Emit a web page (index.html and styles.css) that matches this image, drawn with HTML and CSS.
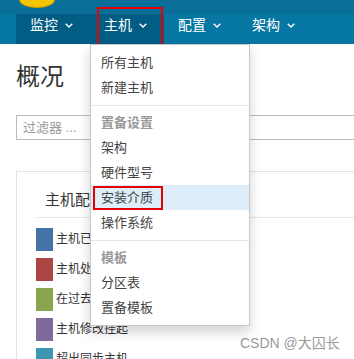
FILE: index.html
```html
<!DOCTYPE html>
<html lang="zh-CN">
  <head>
    <meta charset="UTF-8" />
    <meta name="viewport" content="width=device-width, initial-scale=1.0" />
    <title>概况</title>
    <link rel="stylesheet" href="styles.css">
  </head>
  <body>
    <div class="top-strip">
      <svg class="logo" width="40" height="9" viewBox="0 0 40 9">
        <ellipse cx="19" cy="0" rx="17.5" ry="7.5" fill="#f4c600" stroke="#c79b00" stroke-width="1" />
      </svg>
    </div>

    <nav class="navbar">
      <div class="nav-item dark">监控<svg class="caret" width="8" height="5" viewBox="0 0 8 5"><polyline points="0.7,0.7 4,4 7.3,0.7" /></svg></div>
      <div class="nav-item dark open">
        主机<svg class="caret" width="8" height="5" viewBox="0 0 8 5"><polyline points="0.7,0.7 4,4 7.3,0.7" /></svg>
        <span class="mark mark-nav"></span>
        <ul class="dropdown">
          <li>所有主机</li>
          <li>新建主机</li>
          <li class="divider"></li>
          <li class="header">置备设置</li>
          <li>架构</li>
          <li>硬件型号</li>
          <li class="active">安装介质<span class="mark mark-item"></span></li>
          <li>操作系统</li>
          <li class="divider"></li>
          <li class="header">模板</li>
          <li>分区表</li>
          <li>置备模板</li>
        </ul>
      </div>
      <div class="nav-item">配置<svg class="caret" width="8" height="5" viewBox="0 0 8 5"><polyline points="0.7,0.7 4,4 7.3,0.7" /></svg></div>
      <div class="nav-item">架构<svg class="caret" width="8" height="5" viewBox="0 0 8 5"><polyline points="0.7,0.7 4,4 7.3,0.7" /></svg></div>
    </nav>

    <main class="content">
      <h1 class="title">概况</h1>
      <input class="filter" type="text" placeholder="过滤器 ..." />

      <section class="card">
        <h2 class="card-title">主机配置状态</h2>
        <ul class="legend">
          <li><span class="swatch" style="background:#4572a7"></span>主机已更改</li>
          <li><span class="swatch" style="background:#aa4643"></span>主机处于错误状态</li>
          <li><span class="swatch" style="background:#89a54e"></span>在过去35分钟内</li>
          <li><span class="swatch" style="background:#80699b"></span>主机修改挂起</li>
          <li><span class="swatch" style="background:#3d96ae"></span>超出同步主机</li>
        </ul>
      </section>
    </main>

    <div class="watermark">CSDN @大囚长</div>
  </body>
</html>
```

FILE: styles.css
```css
html, body {
  margin: 0;
  height: 359px;
  overflow: hidden;
}
body {
  position: relative;
  font-family: "Liberation Sans", "Noto Sans CJK SC", sans-serif;
  color: #333;
  background: #fff;
}

/* 상단 */
.top-strip {
  height: 14px;
  background: #096f99;
  position: relative;
}
.logo {
  position: absolute;
  left: 18px;
  top: 0;
}

.navbar {
  display: flex;
  height: 30px;
  padding-left: 16px;
  background: #0677a2;
  position: relative;
}
.nav-item {
  position: relative;
  display: flex;
  align-items: flex-start;
  padding: 0 17px 0 14px;
  line-height: 22px;
  font-size: 14px;
  color: #fff;
  width: 74px;
  box-sizing: border-box;
}
.nav-item.dark {
  background: #015d84;
}
.caret {
  margin: 9px 0 0 7px;
  fill: none;
  stroke: #fff;
  stroke-width: 1.4;
}

/* 빨간 표시 */
.mark {
  position: absolute;
  border: 2px solid #e60000;
  box-sizing: border-box;
}
.mark-nav {
  left: 7px;
  top: -7px;
  width: 66px;
  height: 39px;
}
.mark-item {
  left: 2px;
  top: 1px;
  width: 70px;
  height: 24px;
}

/* 드롭다운 */
.dropdown {
  position: absolute;
  top: 30px;
  left: 0;
  width: 160px;
  box-sizing: border-box;
  margin: 0;
  padding: 5px 0;
  list-style: none;
  background: #fff;
  border: 1px solid #c8c8c8;
  box-shadow: 0 6px 12px rgba(0, 0, 0, 0.175);
  z-index: 5;
}
.dropdown li {
  position: relative;
  padding: 3px 10px;
  line-height: 19px;
  font-size: 13px;
  color: #444;
}
.dropdown .header {
  color: #999;
  font-weight: bold;
}
.dropdown .active {
  background: #ddeefa;
}
.dropdown .divider {
  height: 1px;
  padding: 0;
  margin: 4.5px 0;
  background: #e5e5e5;
}

/* 본문 */
.content {
  padding: 0 16px;
  width: 420px;
}
.title {
  margin: 17px 0 0;
  font-size: 24px;
  line-height: 32px;
  font-weight: normal;
  color: #333;
}
.filter {
  display: block;
  margin-top: 22px;
  width: 420px;
  height: 25px;
  box-sizing: border-box;
  border: 1px solid #bbb;
  padding: 0 6px;
  font-family: inherit;
  font-size: 13px;
}
.filter::placeholder {
  color: #999;
}

.card {
  margin-top: 31px;
  border: 1px solid #e3e3e3;
  padding: 0 19px;
  height: 400px;
}
.card-title {
  margin: 0;
  padding: 18px 0 7px 9px;
  font-size: 15px;
  line-height: 20px;
  font-weight: normal;
  color: #333;
  border-bottom: 1px solid #e5e5e5;
}
.legend {
  list-style: none;
  margin: 10px 0 0;
  padding: 0;
  display: flex;
  flex-direction: column;
  gap: 7px;
}
.legend li {
  display: flex;
  align-items: center;
  gap: 3px;
  font-size: 12px;
  line-height: 23px;
  color: #333;
}
.swatch {
  width: 17px;
  height: 23px;
}

.watermark {
  position: absolute;
  left: 240px;
  top: 335px;
  font-size: 14px;
  line-height: 16px;
  color: #9a9a9a;
}
```
